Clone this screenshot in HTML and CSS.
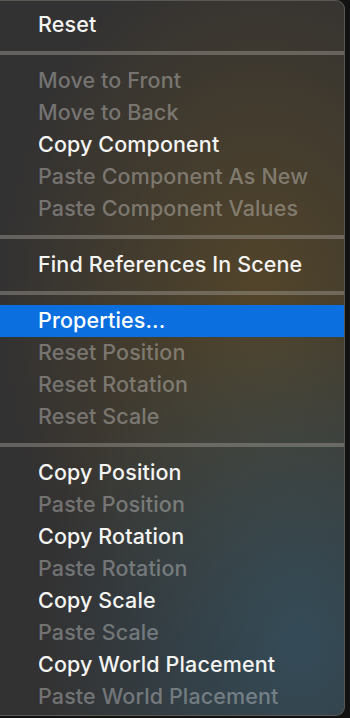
FILE: index.html
```html
<!DOCTYPE html>
<html>
<head>
<meta charset="utf-8">
<link rel="stylesheet" href="styles.css">
</head>
<body>
<div class="menu">
  <div class="item on">Reset</div>
  <div class="sep"></div>
  <div class="item off">Move to Front</div>
  <div class="item off">Move to Back</div>
  <div class="item on">Copy Component</div>
  <div class="item off">Paste Component As New</div>
  <div class="item off">Paste Component Values</div>
  <div class="sep"></div>
  <div class="item on">Find References In Scene</div>
  <div class="sep"></div>
  <div class="item on sel">Properties...</div>
  <div class="item off">Reset Position</div>
  <div class="item off">Reset Rotation</div>
  <div class="item off">Reset Scale</div>
  <div class="sep"></div>
  <div class="item on">Copy Position</div>
  <div class="item off">Paste Position</div>
  <div class="item on">Copy Rotation</div>
  <div class="item off">Paste Rotation</div>
  <div class="item on">Copy Scale</div>
  <div class="item off">Paste Scale</div>
  <div class="item on">Copy World Placement</div>
  <div class="item off">Paste World Placement</div>
</div>
</body>
</html>
```
FILE: styles.css
```css
html, body {
  margin: 0;
  padding: 0;
  background: #121212;
  width: 350px;
  height: 718px;
  overflow: hidden;
}
.menu {
  width: 345px;
  height: 716px;
  box-sizing: border-box;
  padding: 8px 0 4px 0;
  border: 1px solid #5a5853;
  border-left: none;
  border-radius: 0 9px 9px 0;
  background:
    radial-gradient(ellipse 260px 340px at 300px 640px, rgba(52, 78, 92, 0.9), rgba(52, 78, 92, 0) 100%),
    radial-gradient(ellipse 260px 360px at 260px 300px, rgba(88, 72, 40, 0.85), rgba(88, 72, 40, 0) 100%),
    #333232;
  font-family: Inter, "Liberation Sans", sans-serif;
  font-size: 21.5px;
  font-weight: 500;
  letter-spacing: 0.12px;
  overflow: hidden;
}
.item {
  height: 32px;
  line-height: 30px;
  padding-left: 38px;
  white-space: nowrap;
}
.on { color: #f4f4f2; }
.off { color: rgba(255, 255, 255, 0.33); }
.sel { background: #0b6fe0; color: #ffffff; }
.sep {
  height: 4px;
  margin: 10px 0;
  background: rgba(160, 156, 148, 0.45);
}
```
